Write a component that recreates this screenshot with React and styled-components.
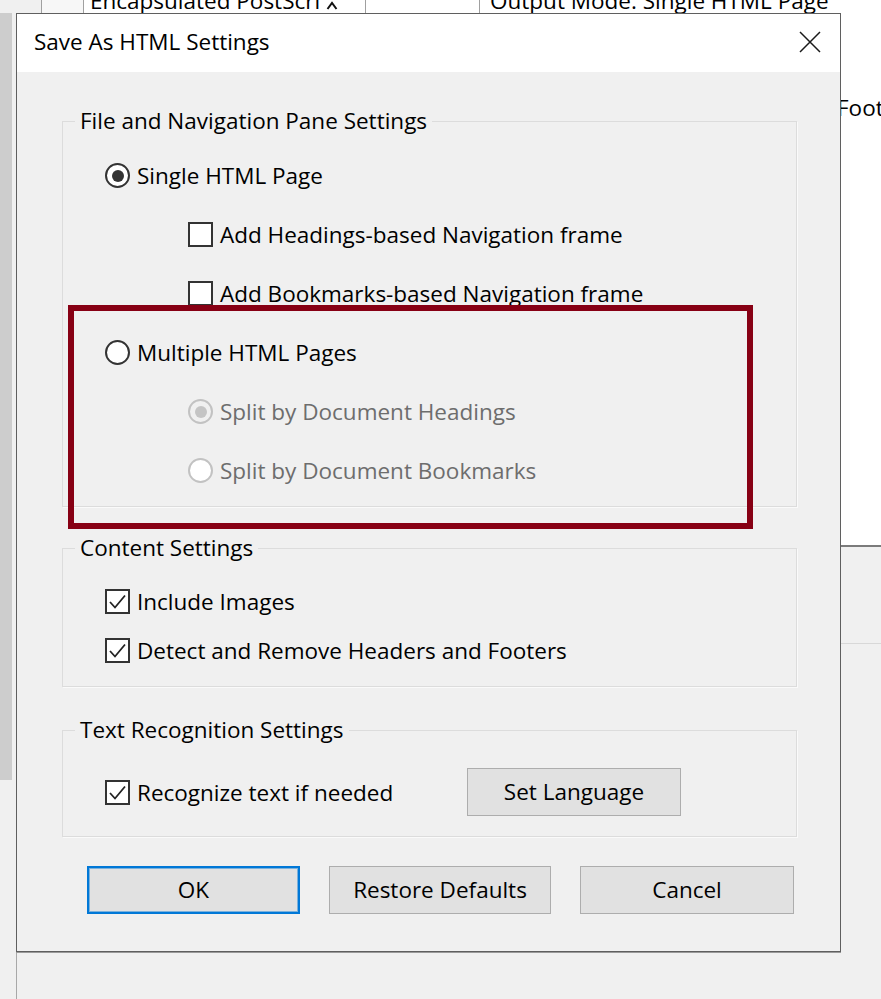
import React from 'react';
import styled, { createGlobalStyle } from 'styled-components';

/* ─── Global ─────────────────────────────────────────────────────────── */

const GlobalStyle = createGlobalStyle`
  html, body {
    margin: 0;
    padding: 0;
    background: #f0f0f0;
  }
  body {
    font-family: "Open Sans", "Noto Sans", sans-serif;
    font-size: 22.5px;
    color: #000;
  }
`;

/* ─── Backdrop (app behind the dialog) ───────────────────────────────── */

const Screen = styled.div`
  width: 881px;
  height: 999px;
  overflow: hidden;
  display: grid;
  grid-template-columns: 16px 825px 1fr;
  grid-template-rows: 13px auto 1fr;
  background: #f0f0f0;
`;

const TopStrip = styled.div`
  grid-column: 1 / -1;
  display: flex;
  height: 13px;
  overflow: hidden;
  background: #fff;
`;

const StripCell = styled.div`
  flex: ${p => (p.$w ? `0 0 ${p.$w}px` : '1')};
  display: flex;
  align-items: flex-start;
  gap: 6px;
  padding-left: ${p => p.$pad || 0}px;
  background: ${p => p.$bg || '#fff'};
  border-right: ${p => (p.$line ? '1px solid #a0a0a0' : 'none')};
  box-sizing: border-box;
  overflow: hidden;
`;

const StripText = styled.span`
  line-height: 26px;
  margin-top: -12px;
  white-space: nowrap;
`;

const LeftRail = styled.div`
  grid-column: 1;
  grid-row: 2 / 4;
  background: #f0f0f0;
`;

const RailThumb = styled.div`
  width: 12px;
  height: 767px;
  background: #cdcdcd;
`;

const BelowDialog = styled.div`
  grid-column: 2;
  grid-row: 3;
  border-left: 1px solid #a8a8a8;
  background: #f0f0f0;
`;

const RightPane = styled.div`
  grid-column: 3;
  grid-row: 2 / 4;
  display: flex;
  flex-direction: column;
  overflow: hidden;
`;

const PaneWhite = styled.div`
  height: 532px;
  background: #fff;
  padding-top: 80px;
  box-sizing: border-box;
  white-space: nowrap;
`;

const PaneText = styled.span`
  display: block;
  margin-left: -4px;
  line-height: 30px;
`;

const PaneDivider = styled.div`
  height: 2px;
  background: #7b7b7b;
`;

const PaneGray = styled.div`
  height: ${p => p.$h ? `${p.$h}px` : 'auto'};
  flex: ${p => p.$h ? 'none' : '1'};
  background: #f0f0f0;
  border-bottom: ${p => p.$line ? '1px solid #d8d8d8' : 'none'};
`;

/* ─── Dialog ─────────────────────────────────────────────────────────── */

const Dialog = styled.div`
  grid-column: 2;
  grid-row: 2;
  position: relative;
  border: 1px solid #5f5f5f;
  box-shadow: 0 1px 0 #9a9a9a;
  background: #f0f0f0;
  display: flex;
  flex-direction: column;
`;

const TitleBar = styled.div`
  height: 58px;
  background: #fff;
  display: flex;
  align-items: center;
  justify-content: space-between;
  padding: 0 19px 0 17px;
`;

const Title = styled.div`
  line-height: 30px;
  margin-top: -2px;
`;

const CloseButton = styled.div`
  width: 22px;
  height: 22px;
  display: flex;
  margin-top: -3px;
`;

const Body = styled.div`
  padding: 34px 43px 37px 45px;
  display: flex;
  flex-direction: column;
`;

const Group = styled.fieldset`
  margin: ${p => p.$mt || 0}px 0 0;
  padding: ${p => p.$pt}px 0 ${p => p.$pb}px;
  border: 1px solid #dcdcdc;
  box-shadow: 1px 1px 0 #fafafa;
  min-width: 0;
  display: flex;
  flex-direction: column;
`;

const Legend = styled.legend`
  padding: 0 5px;
  margin-left: 12px;
  line-height: 30px;
`;

const Option = styled.div`
  height: ${p => p.$h}px;
  display: flex;
  align-items: center;
  gap: 7px;
  padding-left: ${p => p.$indent}px;
  color: ${p => (p.$disabled ? '#6d6d6d' : '#000')};
  white-space: nowrap;
`;

const Radio = styled.span`
  flex-shrink: 0;
  width: 25px;
  height: 25px;
  box-sizing: border-box;
  border-radius: 50%;
  border: 2px solid ${p => (p.$disabled ? '#c2c2c2' : '#333')};
  background: ${p => (p.$disabled && p.$checked ? '#f0f0f0' : '#fff')};
  display: flex;
  align-items: center;
  justify-content: center;

  &::after {
    content: '';
    display: ${p => (p.$checked ? 'block' : 'none')};
    width: 12px;
    height: 12px;
    border-radius: 50%;
    background: ${p => (p.$disabled ? '#c4c4c4' : '#333')};
  }
`;

const Box = styled.span`
  flex-shrink: 0;
  width: 25px;
  height: 25px;
  box-sizing: border-box;
  border: 2px solid #333;
  background: #fff;
  display: flex;
  align-items: center;
  justify-content: center;
`;

const LangRow = styled.div`
  display: grid;
  grid-template-columns: 404px 214px;
  align-items: center;
`;

const Button = styled.div`
  width: ${p => p.$w}px;
  height: 48px;
  box-sizing: border-box;
  display: flex;
  align-items: center;
  justify-content: center;
  background: #e1e1e1;
  border: ${p => (p.$default ? '2px solid #0078d7' : '1px solid #adadad')};
  box-shadow: ${p => (p.$default ? 'inset 0 0 0 1px rgba(0, 120, 215, 0.45)' : 'none')};
  line-height: 30px;
`;

const ButtonRow = styled.div`
  display: flex;
  gap: 29px;
  margin: 29px 0 0 25px;
`;

const Annotation = styled.div`
  position: absolute;
  left: 51px;
  top: 291px;
  width: 685px;
  height: 224px;
  box-sizing: border-box;
  border: 6px solid #870014;
  pointer-events: none;
`;

/* ─── Bits ───────────────────────────────────────────────────────────── */

const CheckMark = () => (
  <svg width="19" height="17" viewBox="0 0 19 17">
    <path d="M2 9 L7 14.5 L17 2.5" fill="none" stroke="#222" strokeWidth="1.8" />
  </svg>
);

const Check = ({ checked, indent, h, children }) => (
  <Option $indent={indent} $h={h}>
    <Box>{checked && <CheckMark />}</Box>
    <span>{children}</span>
  </Option>
);

const Choice = ({ checked, disabled, indent, h, children }) => (
  <Option $indent={indent} $h={h} $disabled={disabled}>
    <Radio $checked={checked} $disabled={disabled} />
    <span>{children}</span>
  </Option>
);

const Chevron = () => (
  <svg width="12" height="10" viewBox="0 0 12 10" style={{ marginTop: 1 }}>
    <path d="M1.5 8 L6 2 L10.5 8" fill="none" stroke="#111" strokeWidth="2" />
  </svg>
);

/* ─── Component ──────────────────────────────────────────────────────── */

export default function App() {
  return (
    <>
      <GlobalStyle />
      <Screen>
        <TopStrip>
          <StripCell $w={16} $bg="#f0f0f0" />
          <StripCell $w={26} $bg="#f0f0f0" $line />
          <StripCell $w={42} $bg="#f7f7f7" $line />
          <StripCell $w={282} $pad={6} $line>
            <StripText>Encapsulated PostScri</StripText>
            <Chevron />
          </StripCell>
          <StripCell $w={114} $line />
          <StripCell $pad={10}>
            <StripText>Output Mode: Single HTML Page</StripText>
          </StripCell>
        </TopStrip>

        <LeftRail>
          <RailThumb />
        </LeftRail>

        <Dialog>
          <TitleBar>
            <Title>Save As HTML Settings</Title>
            <CloseButton>
              <svg width="22" height="22" viewBox="0 0 22 22">
                <path d="M1 1 L21 21 M21 1 L1 21" stroke="#1a1a1a" strokeWidth="1.5" />
              </svg>
            </CloseButton>
          </TitleBar>

          <Body>
            <Group $pt={10} $pb={6}>
              <Legend>File and Navigation Pane Settings</Legend>
              <Choice checked indent={42} h={59}>Single HTML Page</Choice>
              <Check indent={125} h={59}>Add Headings-based Navigation frame</Check>
              <Check indent={125} h={59}>Add Bookmarks-based Navigation frame</Check>
              <Choice indent={42} h={59}>Multiple HTML Pages</Choice>
              <Choice checked disabled indent={125} h={59}>Split by Document Headings</Choice>
              <Choice disabled indent={125} h={59}>Split by Document Bookmarks</Choice>
            </Group>

            <Group $mt={26} $pt={14} $pb={11}>
              <Legend>Content Settings</Legend>
              <Check checked indent={42} h={49}>Include Images</Check>
              <Check checked indent={42} h={49}>Detect and Remove Headers and Footers</Check>
            </Group>

            <Group $mt={28} $pt={23} $pb={20}>
              <Legend>Text Recognition Settings</Legend>
              <LangRow>
                <Check checked indent={42} h={48}>Recognize text if needed</Check>
                <Button $w={214}>Set Language</Button>
              </LangRow>
            </Group>

            <ButtonRow>
              <Button $w={213} $default>OK</Button>
              <Button $w={222}>Restore Defaults</Button>
              <Button $w={214}>Cancel</Button>
            </ButtonRow>
          </Body>

          <Annotation />
        </Dialog>

        <BelowDialog />

        <RightPane>
          <PaneWhite>
            <PaneText>Footers</PaneText>
          </PaneWhite>
          <PaneDivider />
          <PaneGray $h={96} $line />
          <PaneGray />
        </RightPane>
      </Screen>
    </>
  );
}
